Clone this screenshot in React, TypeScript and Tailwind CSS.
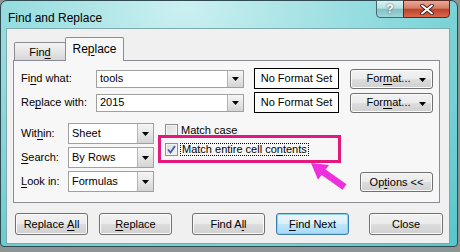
import React from 'react';

const Key = ({ children }: { children: React.ReactNode }) => (
  <span className="underline decoration-1 underline-offset-[2px]">{children}</span>
);

const Caret = () => (
  <svg width="7" height="4" viewBox="0 0 7 4">
    <path d="M0 0h7L3.5 4z" fill="#000" />
  </svg>
);

const btn =
  'flex items-center justify-center rounded-[3px] border border-[#707070] bg-[linear-gradient(180deg,#f2f2f2_0%,#ebebeb_48%,#dddddd_52%,#cfcfcf_100%)] shadow-[inset_0_0_0_1px_#fbfbfb] text-black';

interface ComboProps {
  value: string;
  size: string;
}

const Combo: React.FC<ComboProps> = ({ value, size }) => (
  <div className={`flex border border-[#a0a0a0] bg-white ${size}`}>
    <div className="flex flex-1 items-center pl-[3px]">{value}</div>
    <div className="flex w-[16px] items-center justify-center border-l border-[#b4b4b4] bg-[linear-gradient(180deg,#f6f6f6_0%,#e6e6e6_50%,#d4d4d4_100%)]">
      <Caret />
    </div>
  </div>
);

const Checkbox = ({ checked }: { checked?: boolean }) => (
  <div className="flex h-[13px] w-[13px] items-center justify-center border border-[#8f8f8f] bg-[linear-gradient(135deg,#dcdcdc_0%,#f4f4f4_100%)] shadow-[inset_0_0_0_1px_#f4f4f4]">
    {checked && (
      <svg width="9" height="9" viewBox="0 0 9 9">
        <path d="M1 4.5L3.5 7.5L8 1" stroke="#4a5c9c" strokeWidth="1.8" fill="none" />
      </svg>
    )}
  </div>
);

export default function App() {
  return (
    <div className="relative h-[252px] w-[460px] overflow-hidden bg-[#8c9494] font-['Liberation_Sans',Arial,sans-serif] text-[11px] text-black">
      <div className="flex h-[247px] w-[458px] flex-col rounded-t-[7px] rounded-b-[4px] border border-[#2f4a50] bg-[radial-gradient(ellipse_at_40%_0%,#cdf0f1_0%,#96dde0_45%,#58c6ca_100%)]">
        {/* title bar */}
        <div className="flex h-[27px] items-start justify-between">
          <div className="pl-[7px] pt-[8px] text-[12px]">Find and Replace</div>
          <div className="mr-[7px] flex -mt-px">
            <div className="flex h-[18px] w-[28px] items-center justify-center rounded-bl-[4px] border border-[#46666c] bg-[linear-gradient(180deg,#dcf1f2_0%,#b6dfe1_45%,#7fc2c5_52%,#a0d6d8_100%)] text-[12px] font-bold text-white [text-shadow:0_0_2px_#333]">
              ?
            </div>
            <div className="-ml-px flex h-[18px] w-[47px] items-center justify-center rounded-br-[4px] border border-[#5a2a22] bg-[linear-gradient(180deg,#e9a895_0%,#d57c66_45%,#bf422b_52%,#d8684c_100%)]">
              <svg width="14" height="11" viewBox="0 0 14 11">
                <path d="M2 1.5L12 9.5M12 1.5L2 9.5" stroke="#3a1a14" strokeWidth="3.6" strokeLinecap="round" />
                <path d="M2 1.5L12 9.5M12 1.5L2 9.5" stroke="#fff" strokeWidth="2" strokeLinecap="round" />
              </svg>
            </div>
          </div>
        </div>

        {/* client area */}
        <div className="ml-[5px] flex h-[216px] w-[444px] flex-col border border-[#7ea9ad] bg-[#f0f0f0] pl-[6px] pt-[8px]">
          {/* tabs */}
          <div className="flex h-[23px] items-end pl-[1px]">
            <div className="flex h-[18px] w-[52px] items-center justify-center rounded-t-[2px] border border-b-0 border-[#898c95] bg-[linear-gradient(180deg,#f3f3f3_0%,#e6e6e6_50%,#d6d6d6_100%)] pt-[2px]">
              Fin<Key>d</Key>
            </div>
            <div className="relative z-10 -mb-px -ml-px flex h-[24px] w-[59px] items-center justify-center rounded-t-[2px] border border-b-0 border-[#898c95] bg-[#f7f7f7] pb-[2px] text-[12px]">
              Re<Key>p</Key>lace
            </div>
          </div>

          {/* tab page */}
          <div className="flex h-[143px] w-[427px] flex-col border border-[#898c95] bg-[#f7f7f7] pl-[7px] pr-[6px] pt-[7px]">
            <div className="flex h-[21px] items-center">
              <div className="w-[75px]">
                Fi<Key>n</Key>d what:
              </div>
              <Combo value="tools" size="h-[18px] w-[148px]" />
              <div className="ml-[10px] flex h-[21px] w-[85px] items-center justify-center border border-black bg-white">
                No Format Set
              </div>
              <div className={`${btn} relative ml-[11px] h-[20px] w-[83px]`}>
                <span className="-ml-[6px]">
                  For<Key>m</Key>at...
                </span>
                <span className="absolute right-[6px] top-[8px] flex">
                  <Caret />
                </span>
              </div>
            </div>
            <div className="mt-[3px] flex h-[21px] items-center">
              <div className="w-[75px]">
                Re<Key>p</Key>lace with:
              </div>
              <Combo value="2015" size="h-[18px] w-[148px]" />
              <div className="ml-[10px] flex h-[21px] w-[85px] items-center justify-center border border-black bg-white">
                No Format Set
              </div>
              <div className={`${btn} relative ml-[11px] h-[20px] w-[83px]`}>
                <span className="-ml-[6px]">
                  For<Key>m</Key>at...
                </span>
                <span className="absolute right-[6px] top-[8px] flex">
                  <Caret />
                </span>
              </div>
            </div>

            <div className="mt-[10px] flex">
              <div className="flex flex-col gap-[3px]">
                <div className="flex h-[21px] items-center">
                  <div className="w-[47px]">
                    Wit<Key>h</Key>in:
                  </div>
                  <Combo value="Sheet" size="h-[21px] w-[86px]" />
                </div>
                <div className="flex h-[21px] items-center">
                  <div className="w-[47px]">
                    <Key>S</Key>earch:
                  </div>
                  <Combo value="By Rows" size="h-[21px] w-[86px]" />
                </div>
                <div className="flex h-[21px] items-center">
                  <div className="w-[47px]">
                    <Key>L</Key>ook in:
                  </div>
                  <Combo value="Formulas" size="h-[21px] w-[86px]" />
                </div>
              </div>

              <div className="ml-[11px] flex flex-col gap-[5px]">
                <div className="flex h-[14px] items-center">
                  <Checkbox />
                  <span className="ml-[3px]">Match case</span>
                </div>
                <div className="flex h-[14px] items-center">
                  <Checkbox checked />
                  <span className="ml-[2px] border border-dotted border-black px-px leading-[11px]">
                    Match entire cell co<Key>n</Key>tents
                  </span>
                </div>
              </div>

              <div className={`${btn} ml-auto h-[20px] w-[73px] self-end`}>
                Op<Key>t</Key>ions &lt;&lt;
              </div>
            </div>
          </div>

          {/* bottom buttons */}
          <div className="ml-[2px] mt-[10px] flex">
            <div className={`${btn} h-[22px] w-[73px]`}>
              <span>Replace{'\u00a0'}</span>
              <Key>A</Key>
              <span>ll</span>
            </div>
            <div className={`${btn} ml-[11px] h-[22px] w-[73px]`}>
              <Key>R</Key>eplace
            </div>
            <div className={`${btn} ml-[20px] h-[22px] w-[73px]`}>
              Find A<Key>l</Key>l
            </div>
            <div className="ml-[11px] flex h-[22px] w-[73px] items-center justify-center rounded-[3px] border border-[#3c7fb1] bg-[linear-gradient(180deg,#eaf6fd_0%,#d9f0fc_48%,#bee6fd_52%,#a7d9f5_100%)] shadow-[inset_0_0_0_1px_#8fd0ef]">
              <Key>F</Key>ind Next
            </div>
            <div className={`${btn} ml-[20px] h-[22px] w-[74px]`}>Close</div>
          </div>
        </div>
      </div>

      {/* annotation overlays */}
      <div className="absolute left-[158px] top-[135px] h-[28px] w-[183px] border-[3px] border-[#e3197e]" />
      <svg className="absolute left-[300px] top-[155px]" width="55" height="40" viewBox="300 155 55 40">
        <polygon
          points="311,163 329,165 325.6,169.6 346.5,184.3 342.5,189.7 321.6,175 318,179.8"
          fill="#ee2fdc"
        />
      </svg>
    </div>
  );
}
